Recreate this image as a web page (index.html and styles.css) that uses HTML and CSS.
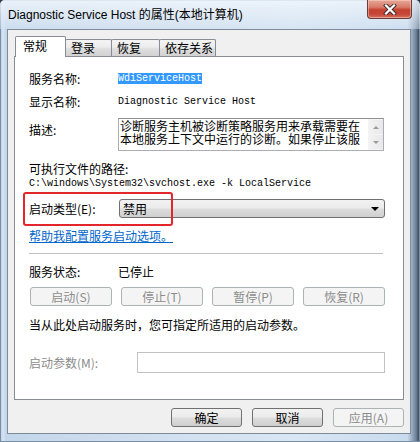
FILE: index.html
```html
<!DOCTYPE html>
<html lang="zh-CN">
<head>
<meta charset="utf-8">
<title>Diagnostic Service Host 的属性</title>
<link rel="stylesheet" href="styles.css">
</head>
<body>
<div class="window">
  <div class="titlebar">
    <span class="title">Diagnostic Service Host 的属性(本地计算机)</span>
    <div class="close">
      <svg width="14" height="11" viewBox="0 0 14 11">
        <path d="M3 1.5 L11 9.5 M11 1.5 L3 9.5" stroke="#3a2a2a" stroke-width="4" stroke-linecap="square" fill="none"/>
        <path d="M3 1.5 L11 9.5 M11 1.5 L3 9.5" stroke="#ffffff" stroke-width="2.2" stroke-linecap="square" fill="none"/>
      </svg>
    </div>
  </div>
  <div class="client">
    <div class="tabs">
      <div class="tab selected">常规</div>
      <div class="tab t2">登录</div>
      <div class="tab t3">恢复</div>
      <div class="tab t4">依存关系</div>
    </div>
    <div class="panel">
      <div class="row r1">
        <span class="label">服务名称:</span>
        <span class="mono sel">WdiServiceHost</span>
      </div>
      <div class="row r2">
        <span class="label">显示名称:</span>
        <span class="mono">Diagnostic Service Host</span>
      </div>
      <div class="row r3">
        <span class="label desc-label">描述:</span>
        <div class="textarea">
          <div class="ta-text">
            <div class="ta-line">诊断服务主机被诊断策略服务用来承载需要在</div>
            <div class="ta-line">本地服务上下文中运行的诊断。如果停止该服</div>
          </div>
          <div class="vscroll">
            <div class="sbtn"><span class="tri up"></span></div>
            <div class="sbtn"><span class="tri down"></span></div>
          </div>
        </div>
      </div>
      <div class="row r4">可执行文件的路径:</div>
      <div class="row r5"><span class="mono">C:\windows\System32\svchost.exe -k LocalService</span></div>
      <div class="row r6">
        <span class="label">启动类型(E):</span>
        <div class="select">
          <span class="select-text">禁用</span>
          <span class="arrow"></span>
        </div>
      </div>
      <div class="row r7"><span class="link">帮助我配置服务启动选项。</span></div>
      <div class="sep"></div>
      <div class="row r8">
        <span class="label">服务状态:</span>
        <span>已停止</span>
      </div>
      <div class="row r9">
        <div class="btn disabled">启动(S)</div>
        <div class="btn disabled">停止(T)</div>
        <div class="btn disabled">暂停(P)</div>
        <div class="btn disabled">恢复(R)</div>
      </div>
      <div class="row r10">当从此处启动服务时，您可指定所适用的启动参数。</div>
      <div class="row r11">
        <span class="label param-label">启动参数(M):</span>
        <div class="input"></div>
      </div>
    </div>
    <div class="footer">
      <div class="btn fbtn">确定</div>
      <div class="btn fbtn">取消</div>
      <div class="btn fbtn disabled">应用(A)</div>
    </div>
  </div>
  <div class="annot"></div>
</div>
</body>
</html>
```
FILE: styles.css
```css
* { box-sizing: border-box; }

html, body {
  margin: 0;
  padding: 0;
}

body {
  width: 420px;
  height: 442px;
  overflow: hidden;
  font-family: "Noto Sans CJK SC", "Noto Sans", sans-serif;
  font-size: 12px;
  color: #000;
  background: #2c3a4a;
}

.window {
  position: relative;
  width: 420px;
  height: 442px;
  background: linear-gradient(90deg, #b7cde6 0px, #d6e4f2 3px, #c3d6ea 6px, #cfdeee 30%, #d9e6f3 70%, #c8dbee 97%, #6f8399 99%, #2f3b48 100%);
  box-shadow: inset 0 0 0 1px #7a8ea5;
  border-radius: 5px 5px 0 0;
}

.titlebar {
  display: flex;
  align-items: flex-start;
  height: 29px;
  background: linear-gradient(180deg, rgba(240,246,252,0.85), rgba(214,228,243,0.5));
  border-radius: 5px 5px 0 0;
}

.title {
  padding: 7px 0 0 8px;
  font-family: "Liberation Sans", "Noto Sans CJK SC", sans-serif;
  font-size: 12px;
  line-height: 16px;
  color: #000;
  white-space: nowrap;
}

.close {
  margin-left: auto;
  margin-right: 8px;
  width: 45px;
  height: 19px;
  border: 1px solid #6a3b37;
  border-top: none;
  border-radius: 0 0 4px 4px;
  background: linear-gradient(180deg, #e7a898 0%, #d77a68 40%, #c4412f 55%, #c6483a 80%, #d8735f 100%);
  display: flex;
  align-items: center;
  justify-content: center;
  box-shadow: inset 0 0 0 1px rgba(255,220,210,0.45);
}

.client {
  margin-left: 7px;
  width: 404px;
  height: 405px;
  background: #f0f0f0;
  border: 1px solid #7f8b99;
  padding: 6px 0 0 6px;
}

.tabs {
  display: flex;
  align-items: flex-end;
  height: 21px;
  margin-left: 1px;
  margin-bottom: -1px;
  position: relative;
  z-index: 1;
}

.tab {
  height: 17px;
  margin-bottom: 1px;
  border: 1px solid #898c95;
  border-bottom: none;
  border-radius: 2px 2px 0 0;
  background: linear-gradient(180deg, #f4f4f4 0%, #ececec 45%, #dedede 55%, #d2d2d2 100%);
  padding-left: 5px;
  line-height: 15px;
  margin-left: -1px;
  white-space: nowrap;
}

.tab.selected {
  height: 21px;
  margin-bottom: 0;
  margin-left: 0;
  width: 51px;
  background: #fff;
  padding-left: 7px;
  line-height: 17px;
  position: relative;
  z-index: 2;
}

.t2 { width: 47px; }
.t3 { width: 49px; }
.t4 { width: 57px; }

.panel {
  width: 390px;
  height: 344px;
  background: #fff;
  border: 1px solid #898c95;
  padding: 13px 0 0 14px;
}

.row {
  display: flex;
  align-items: center;
  white-space: nowrap;
}

.label {
  width: 89px;
  flex: none;
}

.mono {
  font-family: "Liberation Mono", monospace;
  font-size: 10px;
  line-height: 11px;
}

.sel {
  background: #3399ff;
  color: #fff;
}

.r1 { height: 16px; }
.r2 { height: 16px; margin-top: 7px; }
.r3 { height: 33px; margin-top: 9px; align-items: flex-start; }
.desc-label { padding-top: 4px; line-height: 16px; }
.r4 { height: 14px; margin-top: 10px; }
.r5 { height: 14px; margin-top: 1px; }
.r6 { height: 19px; margin-top: 9px; }
.r7 { height: 14px; margin-top: 11px; }
.r8 { height: 15px; margin-top: 10px; }
.r9 { height: 19px; margin-top: 8px; gap: 9px; padding-left: 1px; }
.r10 { height: 16px; margin-top: 10px; }
.r11 { height: 21px; margin-top: 20px; }

.textarea {
  width: 266px;
  height: 33px;
  border: 1px solid #abadb3;
  border-top-color: #8e8f8f;
  display: flex;
  background: #fff;
}

.ta-text {
  flex: 1;
  padding: 0 0 0 1px;
}

.ta-line {
  font-size: 12px;
  line-height: 13px;
  height: 13px;
  white-space: nowrap;
}

.vscroll {
  width: 15px;
  flex: none;
  background: #f4f4f4;
  display: flex;
  flex-direction: column;
  justify-content: space-between;
  padding: 1px 0;
}

.sbtn {
  height: 14px;
  display: flex;
  align-items: center;
  justify-content: center;
  background: linear-gradient(90deg, #f3f3f3, #e8e8e8);
}

.tri {
  width: 0;
  height: 0;
  border-left: 3px solid transparent;
  border-right: 3px solid transparent;
}

.tri.up { border-bottom: 3px solid #9a9a9a; }
.tri.down { border-top: 3px solid #9a9a9a; }

.select {
  margin-left: 1px;
  width: 266px;
  height: 19px;
  border: 1px solid #707070;
  border-radius: 3px;
  background: linear-gradient(180deg, #f2f2f2 0%, #ebebeb 48%, #dddddd 52%, #cfcfcf 100%);
  display: flex;
  align-items: center;
  padding: 0 5px 0 3px;
}

.select-text {
  flex: 1;
  line-height: 15px;
}

.arrow {
  width: 0;
  height: 0;
  border-left: 4px solid transparent;
  border-right: 4px solid transparent;
  border-top: 4px solid #000;
}

.link {
  color: #0066cc;
  text-decoration: underline;
  line-height: 14px;
}

.sep {
  margin-top: 10px;
  width: 354px;
  height: 1px;
  background: #c0c0c0;
}

.btn {
  width: 82px;
  height: 19px;
  border: 1px solid #707070;
  border-radius: 3px;
  background: linear-gradient(180deg, #f2f2f2 0%, #ebebeb 48%, #dddddd 52%, #cfcfcf 100%);
  display: flex;
  align-items: center;
  justify-content: center;
  line-height: 15px;
  color: #000;
}

.btn.disabled {
  border-color: #adb2b5;
  background: #f4f4f4;
  color: #8c8c8c;
}

.param-label {
  width: 108px;
  color: #8c8c8c;
}

.input {
  width: 248px;
  height: 21px;
  border: 1px solid #c2c2c2;
  background: #fff;
}

.footer {
  display: flex;
  justify-content: flex-end;
  gap: 10px;
  width: 390px;
  margin-top: 8px;
}

.fbtn { width: 71px; }

.annot {
  position: absolute;
  left: 23px;
  top: 192px;
  width: 150px;
  height: 34px;
  border: 2px solid #e3262b;
  border-radius: 3px;
}
```
